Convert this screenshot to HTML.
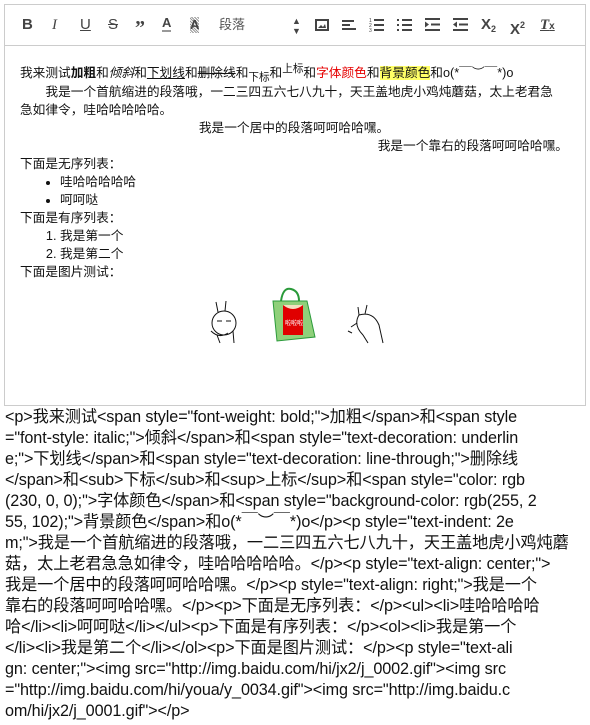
<!DOCTYPE html>
<html><head><meta charset="utf-8">
<style>
*{margin:0;padding:0;box-sizing:border-box}
body{width:590px;height:725px;background:#fff;font-family:"Liberation Sans","Microsoft YaHei","Noto Sans CJK SC",sans-serif;color:#222;overflow:hidden;position:relative}
.ed{position:absolute;left:4px;top:4px;width:582px;height:402px;border:1px solid #ccc}
.tb{position:absolute;left:0;top:0;width:580px;height:41px;border-bottom:1px solid #ccc}
.ic{position:absolute;top:10px;height:20px;font-size:15px;color:#444;line-height:20px;font-weight:bold}
.ct{position:absolute;left:15px;top:59px;width:548px;font-size:12.7px;line-height:18px;color:#111;font-family:"Liberation Sans","Noto Sans CJK SC",sans-serif}
.ct p{margin:0;white-space:nowrap}
.ct sub,.ct sup{line-height:0}
.ct ul,.ct ol{padding-left:40px}
.src{position:absolute;left:5px;top:407px;font-size:16.2px;line-height:21px;color:#111;font-family:"Liberation Sans","Noto Sans CJK SC",sans-serif;white-space:pre;letter-spacing:-0.1px}
</style></head><body>
<div class="ed">
<div class="tb">
<div class="ic" style="left:17px">B</div>
<div class="ic" style="left:47px;font-style:italic;font-family:'Liberation Serif',serif;font-weight:normal;text-decoration:none">I</div>
<div class="ic" style="left:75px;text-decoration:underline;font-weight:normal">U</div>
<div class="ic" style="left:103px;text-decoration:line-through;font-weight:normal">S</div>
<div class="ic" style="left:130px;font-size:20px;font-family:'Liberation Serif',serif;top:13px">”</div>
<div class="ic" style="left:157px;font-size:13px;border-bottom:2px solid #999;height:17px;line-height:16px">A</div>
<div class="ic" style="left:185px;font-size:13px;background:repeating-linear-gradient(45deg,#999 0 1px,#fff 1px 2px);height:16px;line-height:16px;top:12px">A</div>
<div class="ic" style="left:214px;font-size:13px;font-weight:normal;color:#555">段落</div>
<div class="ic" style="left:287px;font-size:9px;line-height:10px;top:11px">▲<br>▼</div>
<svg style="position:absolute;left:310px;top:14px" width="14" height="12"><rect x="1" y="1" width="12" height="10" fill="none" stroke="#444" stroke-width="2"/><path d="M3 9 L6 6 L8 8 L10 5 L11 9Z" fill="#444"/></svg>
<svg style="position:absolute;left:337px;top:14px" width="14" height="12"><path d="M0 2H12M0 6H8M0 10H14" stroke="#444" stroke-width="2"/></svg>
<svg style="position:absolute;left:364px;top:12px" width="16" height="15"><text x="0" y="5" font-size="5" fill="#444">1</text><text x="0" y="10" font-size="5" fill="#444">2</text><text x="0" y="15" font-size="5" fill="#444">3</text><path d="M5 3H15M5 8H15M5 13H15" stroke="#444" stroke-width="2"/></svg>
<svg style="position:absolute;left:392px;top:12px" width="16" height="15"><path d="M0 3H2M0 8H2M0 13H2M5 3H15M5 8H15M5 13H15" stroke="#444" stroke-width="2"/></svg>
<svg style="position:absolute;left:420px;top:12px" width="16" height="15"><path d="M0 2H15M6 7.5H15M0 13H15" stroke="#444" stroke-width="2"/><path d="M0 4.5L4 7.5L0 10.5Z" fill="#444"/></svg>
<svg style="position:absolute;left:448px;top:12px" width="16" height="15"><path d="M0 2H15M6 7.5H15M0 13H15" stroke="#444" stroke-width="2"/><path d="M4 4.5L0 7.5L4 10.5Z" fill="#444"/></svg>
<div class="ic" style="left:476px;font-size:15px">X<span style="font-size:9px;vertical-align:-3px">2</span></div>
<div class="ic" style="left:505px;font-size:15px">X<span style="font-size:9px;vertical-align:6px">2</span></div>
<div class="ic" style="left:535px;font-style:italic;font-family:'Liberation Serif',serif;text-decoration:underline">T<span style="font-size:10px;font-family:'Liberation Sans',sans-serif;font-style:normal;text-decoration:none">x</span></div>
</div>
<div class="ct">
<p>我来测试<b>加粗</b>和<i>倾斜</i>和<u>下划线</u>和<s>删除线</s>和<sub>下标</sub>和<sup>上标</sup>和<span style="color:#e60000">字体颜色</span>和<span style="background:#ffff66">背景颜色</span>和o(*￣︶￣*)o</p>
<p style="text-indent:2em;margin-top:1px">我是一个首航缩进的段落哦，一二三四五六七八九十，天王盖地虎小鸡炖蘑菇，太上老君急<br>急如律令，哇哈哈哈哈哈。</p>
<p style="text-align:center">我是一个居中的段落呵呵哈哈嘿。</p>
<p style="text-align:right">我是一个靠右的段落呵呵哈哈嘿。</p>
<p>下面是无序列表：</p>
<ul><li>哇哈哈哈哈哈</li><li>呵呵哒</li></ul>
<p>下面是有序列表：</p>
<ol><li>我是第一个</li><li>我是第二个</li></ol>
<p>下面是图片测试：</p>
</div>
<svg style="position:absolute;left:196px;top:280px" width="190" height="60">
<g fill="none" stroke="#111" stroke-width="1">
<circle cx="23" cy="38" r="12"/><path d="M17 27 L15 17 M24 26 L25 16 M16 36 H21 M25 36 H30 M10 46 Q18 54 27 48 M16 50 L19 58 M32 46 L33 58"/>
<path d="M162 50 Q152 40 158 30 Q172 26 178 40 L182 58 M158 30 L157 22 M164 29 L166 20 M150 42 L156 38 M151 48 L147 46 M162 50 L167 58"/>
</g>
<path d="M72 16 L106 16 L114 52 L76 56 Z" fill="#8fd07a" stroke="#2a9a3a"/>
<path d="M80 16 Q82 2 90 4 Q98 6 98 16" fill="none" stroke="#2a9a3a" stroke-width="2"/>
<rect x="82" y="20" width="20" height="30" fill="#e00000"/>
<path d="M82 20 Q92 28 102 20" fill="#f4e0c0"/>
<text x="84" y="40" font-size="6" fill="#fff">啦啦啦</text>
</svg>
</div>
<div class="src">&lt;p&gt;我来测试&lt;span style="font-weight: bold;"&gt;加粗&lt;/span&gt;和&lt;span style
="font-style: italic;"&gt;倾斜&lt;/span&gt;和&lt;span style="text-decoration: underlin
e;"&gt;下划线&lt;/span&gt;和&lt;span style="text-decoration: line-through;"&gt;删除线
&lt;/span&gt;和&lt;sub&gt;下标&lt;/sub&gt;和&lt;sup&gt;上标&lt;/sup&gt;和&lt;span style="color: rgb
(230, 0, 0);"&gt;字体颜色&lt;/span&gt;和&lt;span style="background-color: rgb(255, 2
55, 102);"&gt;背景颜色&lt;/span&gt;和o(*￣︶￣*)o&lt;/p&gt;&lt;p style="text-indent: 2e
m;"&gt;我是一个首航缩进的段落哦，一二三四五六七八九十，天王盖地虎小鸡炖蘑
菇，太上老君急急如律令，哇哈哈哈哈哈。&lt;/p&gt;&lt;p style="text-align: center;"&gt;
我是一个居中的段落呵呵哈哈嘿。&lt;/p&gt;&lt;p style="text-align: right;"&gt;我是一个
靠右的段落呵呵哈哈嘿。&lt;/p&gt;&lt;p&gt;下面是无序列表：&lt;/p&gt;&lt;ul&gt;&lt;li&gt;哇哈哈哈哈
哈&lt;/li&gt;&lt;li&gt;呵呵哒&lt;/li&gt;&lt;/ul&gt;&lt;p&gt;下面是有序列表：&lt;/p&gt;&lt;ol&gt;&lt;li&gt;我是第一个
&lt;/li&gt;&lt;li&gt;我是第二个&lt;/li&gt;&lt;/ol&gt;&lt;p&gt;下面是图片测试：&lt;/p&gt;&lt;p style="text-ali
gn: center;"&gt;&lt;img src="http://img.baidu.com/hi/jx2/j_0002.gif"&gt;&lt;img src
="http://img.baidu.com/hi/youa/y_0034.gif"&gt;&lt;img src="http://img.baidu.c
om/hi/jx2/j_0001.gif"&gt;&lt;/p&gt;</div>
</body></html>
